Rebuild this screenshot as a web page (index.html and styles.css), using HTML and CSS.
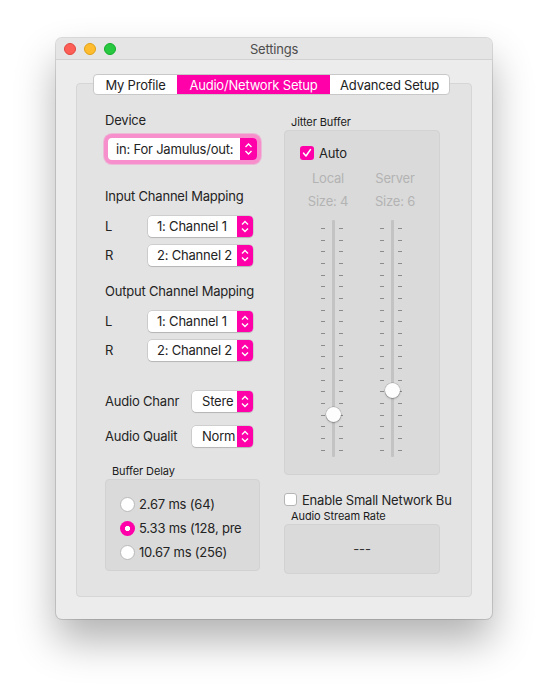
FILE: index.html
```html
<!DOCTYPE html>
<html lang="en">
<head>
    <meta charset="UTF-8">
    <meta name="viewport" content="width=device-width, initial-scale=1.0">
    <title>Settings</title>
    <link rel="stylesheet" href="styles.css">
</head>
<body>
    <div class="window">
        <div class="titlebar">
            <div class="lights">
                <span class="light red"></span>
                <span class="light yellow"></span>
                <span class="light green"></span>
            </div>
            <div class="title">Settings</div>
            <div></div>
        </div>
        <div class="content">
            <div class="tabs">
                <div class="tab tab-profile">My Profile</div>
                <div class="tab tab-audio active">Audio/Network Setup</div>
                <div class="tab tab-advanced">Advanced Setup</div>
            </div>
            <div class="pane">
                <div class="col-left">
                    <div class="label">Device</div>
                    <div class="combo combo-device focused">
                        <span class="combo-text">in: For Jamulus/out:</span>
                        <span class="stepper"><svg width="17" height="22" viewBox="0 0 17 22"><path d="M5.5 9 L8.5 6 L11.5 9 M5.5 13 L8.5 16 L11.5 13" fill="none" stroke="#fff" stroke-width="1.4"/></svg></span>
                    </div>

                    <div class="label section">Input Channel Mapping</div>
                    <div class="row first">
                        <span class="row-label">L</span>
                        <div class="combo combo-channel">
                            <span class="combo-text">1: Channel 1</span>
                            <span class="stepper"><svg width="16" height="21" viewBox="0 0 16 21"><path d="M5 8.5 L8 5.5 L11 8.5 M5 12.5 L8 15.5 L11 12.5" fill="none" stroke="#fff" stroke-width="1.4"/></svg></span>
                        </div>
                    </div>
                    <div class="row">
                        <span class="row-label">R</span>
                        <div class="combo combo-channel">
                            <span class="combo-text">2: Channel 2</span>
                            <span class="stepper"><svg width="16" height="21" viewBox="0 0 16 21"><path d="M5 8.5 L8 5.5 L11 8.5 M5 12.5 L8 15.5 L11 12.5" fill="none" stroke="#fff" stroke-width="1.4"/></svg></span>
                        </div>
                    </div>

                    <div class="label section section-out">Output Channel Mapping</div>
                    <div class="row first">
                        <span class="row-label">L</span>
                        <div class="combo combo-channel">
                            <span class="combo-text">1: Channel 1</span>
                            <span class="stepper"><svg width="16" height="21" viewBox="0 0 16 21"><path d="M5 8.5 L8 5.5 L11 8.5 M5 12.5 L8 15.5 L11 12.5" fill="none" stroke="#fff" stroke-width="1.4"/></svg></span>
                        </div>
                    </div>
                    <div class="row">
                        <span class="row-label">R</span>
                        <div class="combo combo-channel">
                            <span class="combo-text">2: Channel 2</span>
                            <span class="stepper"><svg width="16" height="21" viewBox="0 0 16 21"><path d="M5 8.5 L8 5.5 L11 8.5 M5 12.5 L8 15.5 L11 12.5" fill="none" stroke="#fff" stroke-width="1.4"/></svg></span>
                        </div>
                    </div>

                    <div class="row audio-row channels">
                        <span class="row-label wide">Audio Chanr</span>
                        <div class="combo combo-small">
                            <span class="combo-text">Stere</span>
                            <span class="stepper"><svg width="16" height="21" viewBox="0 0 16 21"><path d="M5 8.5 L8 5.5 L11 8.5 M5 12.5 L8 15.5 L11 12.5" fill="none" stroke="#fff" stroke-width="1.4"/></svg></span>
                        </div>
                    </div>
                    <div class="row audio-row quality">
                        <span class="row-label wide">Audio Qualit</span>
                        <div class="combo combo-small">
                            <span class="combo-text">Norm</span>
                            <span class="stepper"><svg width="16" height="21" viewBox="0 0 16 21"><path d="M5 8.5 L8 5.5 L11 8.5 M5 12.5 L8 15.5 L11 12.5" fill="none" stroke="#fff" stroke-width="1.4"/></svg></span>
                        </div>
                    </div>

                    <div class="group-title buffer-title">Buffer Delay</div>
                    <div class="group-box buffer-box">
                        <div class="radio-row">
                            <span class="radio"></span>
                            <span class="radio-text">2.67 ms (64)</span>
                        </div>
                        <div class="radio-row">
                            <span class="radio checked"></span>
                            <span class="radio-text">5.33 ms (128, pre</span>
                        </div>
                        <div class="radio-row">
                            <span class="radio"></span>
                            <span class="radio-text">10.67 ms (256)</span>
                        </div>
                    </div>
                </div>

                <div class="col-right">
                    <div class="group-title">Jitter Buffer</div>
                    <div class="group-box jitter-box">
                        <div class="check-row">
                            <span class="checkbox checked"><svg width="14" height="14" viewBox="0 0 14 14"><path d="M3.6 7.2 L6 10 L10.4 3.6" fill="none" stroke="#fff" stroke-width="1.6" stroke-linecap="round" stroke-linejoin="round"/></svg></span>
                            <span>Auto</span>
                        </div>
                        <div class="jitter-labels">
                            <span>Local</span>
                            <span>Server</span>
                            <span>Size: 4</span>
                            <span>Size: 6</span>
                        </div>
                        <div class="sliders">
                            <div class="slider">
                                <div class="ticks">
                                    <i></i><i></i><i></i><i></i><i></i><i></i><i></i><i></i><i></i><i></i>
                                    <i></i><i></i><i></i><i></i><i></i><i></i><i></i><i></i><i></i><i></i>
                                </div>
                                <div class="track"></div>
                                <div class="ticks">
                                    <i></i><i></i><i></i><i></i><i></i><i></i><i></i><i></i><i></i><i></i>
                                    <i></i><i></i><i></i><i></i><i></i><i></i><i></i><i></i><i></i><i></i>
                                </div>
                                <span class="thumb" style="top: 187px"></span>
                            </div>
                            <div class="slider">
                                <div class="ticks">
                                    <i></i><i></i><i></i><i></i><i></i><i></i><i></i><i></i><i></i><i></i>
                                    <i></i><i></i><i></i><i></i><i></i><i></i><i></i><i></i><i></i><i></i>
                                </div>
                                <div class="track"></div>
                                <div class="ticks">
                                    <i></i><i></i><i></i><i></i><i></i><i></i><i></i><i></i><i></i><i></i>
                                    <i></i><i></i><i></i><i></i><i></i><i></i><i></i><i></i><i></i><i></i>
                                </div>
                                <span class="thumb" style="top: 163px"></span>
                            </div>
                        </div>
                    </div>

                    <div class="check-row small-net">
                        <span class="checkbox"></span>
                        <span>Enable Small Network Bu</span>
                    </div>
                    <div class="group-title rate-title">Audio Stream Rate</div>
                    <div class="group-box rate-box">---</div>
                </div>
            </div>
        </div>
    </div>
</body>
</html>
```

FILE: styles.css
```css
body {
    margin: 0;
    padding: 38px 0 0 56px;
    min-height: 691px;
    box-sizing: border-box;
    background-color: #fff;
    font-family: Inter, "Liberation Sans", Arial, sans-serif;
    font-size: 13px;
    letter-spacing: -0.2px;
    color: #232323;
}
.window {
    width: 436px;
    background-color: #ececec;
    border-radius: 6px;
    box-shadow: 0 0 0 1px rgba(0, 0, 0, 0.13), 0 22px 40px rgba(0, 0, 0, 0.3);
}
.titlebar {
    height: 21px;
    display: grid;
    grid-template-columns: 1fr auto 1fr;
    align-items: center;
    padding-left: 8px;
    padding-right: 8px;
    background-color: #e5e5e5;
    border-bottom: 1px solid #d2d2d2;
    border-radius: 6px 6px 0 0;
}
.lights {
    display: flex;
    gap: 8px;
}
.light {
    width: 12px;
    height: 12px;
    border-radius: 50%;
    box-sizing: border-box;
}
.red {
    background-color: #fd5f57;
    border: 1px solid #e2463f;
}
.yellow {
    background-color: #febc2e;
    border: 1px solid #e1a116;
}
.green {
    background-color: #28c840;
    border: 1px solid #14ae2b;
}
.title {
    color: #4d4d4d;
    font-size: 13px;
}
.content {
    padding: 14px 20px 22px;
}
.tabs {
    position: relative;
    z-index: 1;
    display: flex;
    width: 357px;
    height: 21px;
    margin: 0 0 -12px 17px;
    box-sizing: border-box;
    background-color: #fff;
    border: 1px solid #c8c8c8;
    border-radius: 4px;
    overflow: hidden;
}
.tab {
    display: flex;
    align-items: center;
    justify-content: center;
    font-size: 13px;
    color: #222;
}
.tab-profile {
    width: 83px;
}
.tab-audio {
    width: 153px;
}
.tab-advanced {
    flex: 1;
}
.tab.active {
    background-color: #ff00a9;
    color: #fff;
}
.pane {
    display: grid;
    grid-template-columns: 155px 156px;
    column-gap: 24px;
    align-items: start;
    padding: 28px 31px 22px 28px;
    background-color: #e3e3e3;
    border: 1px solid #d6d6d6;
    border-radius: 4px;
}
.label {
    line-height: 16px;
}
.label.section {
    margin-top: 28px;
}
.label.section-out {
    margin-top: 17px;
}
.combo {
    display: flex;
    height: 21px;
    box-sizing: border-box;
    background-color: #fff;
    border-radius: 4px;
    box-shadow: 0 0 0 0.5px rgba(0, 0, 0, 0.18), 0 1px 1px rgba(0, 0, 0, 0.12);
    overflow: hidden;
}
.combo-text {
    flex: 1;
    padding-left: 9px;
    line-height: 21px;
    white-space: nowrap;
}
.stepper {
    width: 16px;
    background-color: #ff00a9;
    display: flex;
}
.combo-device {
    width: 149px;
    height: 22px;
    margin: 10px 0 0 3px;
}
.combo-device .combo-text {
    padding-left: 8px;
    line-height: 22px;
}
.combo-device .stepper {
    width: 17px;
}
.combo.focused {
    box-shadow: 0 0 0 4px #f68fcb, 0 0 0 5px rgba(246, 143, 203, 0.5);
}
.row {
    display: flex;
    align-items: center;
    margin-top: 8px;
}
.row.first {
    margin-top: 12px;
}
.row-label {
    width: 43px;
    line-height: 21px;
}
.row-label.wide {
    width: 76px;
    margin-right: 11px;
    white-space: nowrap;
}
.combo-channel {
    width: 105px;
}
.combo-small {
    width: 61px;
}
.combo-small .combo-text {
    padding-left: 10px;
}
.audio-row.channels {
    margin-top: 30px;
}
.audio-row.quality {
    margin-top: 14px;
}
.group-title {
    font-size: 11px;
    line-height: 13px;
    padding-left: 7px;
    letter-spacing: -0.1px;
    color: #1a1a1a;
}
.buffer-title {
    margin-top: 18px;
}
.group-box {
    margin-top: 1px;
    box-sizing: border-box;
    background-color: #dadada;
    border: 1px solid #d2d2d2;
    border-radius: 4px;
}
.buffer-box {
    height: 92px;
    padding: 16px 14px 0 14px;
}
.radio-row {
    display: flex;
    align-items: center;
    height: 16px;
    margin-bottom: 8px;
    white-space: nowrap;
}
.radio {
    width: 15px;
    height: 15px;
    flex: none;
    box-sizing: border-box;
    border-radius: 50%;
    background-color: #fff;
    border: 1px solid #b9b9b9;
    margin-right: 4px;
}
.radio.checked {
    border: none;
    background-color: #ff00a9;
    background-image: radial-gradient(circle, #fff 0, #fff 2.4px, #ff00a9 2.9px);
}
.col-right {
    margin-top: 4px;
}
.jitter-box {
    padding: 15px 15px 17px;
}
.check-row {
    display: flex;
    align-items: center;
    height: 14px;
}
.checkbox {
    width: 14px;
    height: 14px;
    flex: none;
    box-sizing: border-box;
    border-radius: 3px;
    background-color: #fff;
    border: 1px solid #b5b5b5;
    margin-right: 5px;
}
.checkbox.checked {
    background-color: #ff00a9;
    border: none;
}
.jitter-labels {
    display: grid;
    grid-template-columns: 56px 58px;
    column-gap: 10px;
    row-gap: 7px;
    margin-top: 10px;
    text-align: center;
    line-height: 16px;
    color: #b3b3b3;
}
.sliders {
    display: flex;
    gap: 37px;
    margin: 11px 0 0 21px;
}
.slider {
    position: relative;
    display: flex;
    height: 237px;
}
.ticks {
    display: flex;
    flex-direction: column;
    justify-content: space-between;
    padding: 8px 0 6px;
}
.ticks i {
    display: block;
    width: 4px;
    height: 1px;
    background-color: #8c8c8c;
}
.track {
    width: 3px;
    margin: 0 4px 0 7px;
    background-color: #c3c3c3;
    border-radius: 1px;
}
.thumb {
    position: absolute;
    left: 5px;
    width: 15px;
    height: 15px;
    border-radius: 50%;
    background-color: #fdfdfd;
    box-shadow: 0 0 0 0.5px rgba(0, 0, 0, 0.2), 0 1px 2px rgba(0, 0, 0, 0.25);
}
.small-net {
    height: 13px;
    margin-top: 18px;
    white-space: nowrap;
}
.small-net .checkbox {
    width: 13px;
    height: 13px;
}
.rate-title {
    margin-top: 4px;
}
.rate-box {
    height: 50px;
    display: flex;
    align-items: center;
    justify-content: center;
    color: #333;
}
```
